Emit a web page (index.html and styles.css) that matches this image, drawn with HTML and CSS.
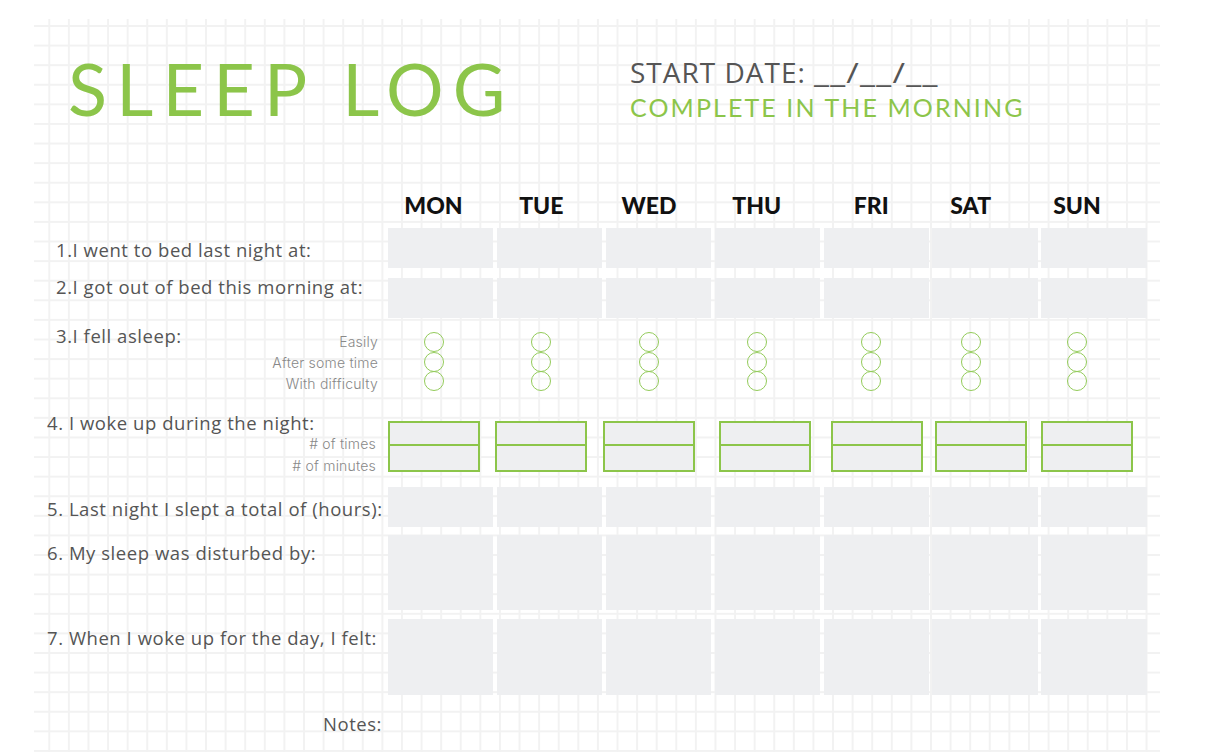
FILE: index.html
```html
<!DOCTYPE html>
<html lang="en">
<head>
<meta charset="utf-8">
<title>Sleep Log</title>
<link rel="stylesheet" href="styles.css">
</head>
<body>
<div class="paper">
  <header class="top">
    <h1 class="title">SLEEP LOG</h1>
    <div class="meta">
      <div class="start">START DATE: <span class="blank">__/__/__</span></div>
      <div class="when">COMPLETE IN THE MORNING</div>
    </div>
  </header>

  <div class="row days">
    <div class="label"></div>
    <div class="daycols">
      <span>MON</span><span>TUE</span><span>WED</span><span>THU</span><span>FRI</span><span>SAT</span><span>SUN</span>
    </div>
  </div>

  <div class="row r1">
    <div class="label">1.I went to bed last night at:</div>
    <div class="cells"><div class="box"></div><div class="box"></div><div class="box"></div><div class="box"></div><div class="box"></div><div class="box"></div><div class="box"></div></div>
  </div>

  <div class="row r2">
    <div class="label">2.I got out of bed this morning at:</div>
    <div class="cells"><div class="box"></div><div class="box"></div><div class="box"></div><div class="box"></div><div class="box"></div><div class="box"></div><div class="box"></div></div>
  </div>

  <div class="row r3">
    <div class="label split">
      <span>3.I fell asleep:</span>
      <ul class="opts"><li>Easily</li><li>After some time</li><li>With difficulty</li></ul>
    </div>
    <div class="daycols bubbles">
      <div class="stack"><i></i><i></i><i></i></div>
      <div class="stack"><i></i><i></i><i></i></div>
      <div class="stack"><i></i><i></i><i></i></div>
      <div class="stack"><i></i><i></i><i></i></div>
      <div class="stack"><i></i><i></i><i></i></div>
      <div class="stack"><i></i><i></i><i></i></div>
      <div class="stack"><i></i><i></i><i></i></div>
    </div>
  </div>

  <div class="row r4">
    <div class="label wide stacked">
      <span>4. I woke up during the night:</span>
      <ul class="opts"><li># of times</li><li># of minutes</li></ul>
    </div>
    <div class="wakecols">
      <div class="wake"><i></i><i></i></div>
      <div class="wake"><i></i><i></i></div>
      <div class="wake"><i></i><i></i></div>
      <div class="wake"><i></i><i></i></div>
      <div class="wake"><i></i><i></i></div>
      <div class="wake"><i></i><i></i></div>
      <div class="wake"><i></i><i></i></div>
    </div>
  </div>

  <div class="row r5">
    <div class="label wide">5. Last night I slept a total of (hours):</div>
    <div class="cells"><div class="box"></div><div class="box"></div><div class="box"></div><div class="box"></div><div class="box"></div><div class="box"></div><div class="box"></div></div>
  </div>

  <div class="row r6">
    <div class="label wide">6. My sleep was disturbed by:</div>
    <div class="cells"><div class="box"></div><div class="box"></div><div class="box"></div><div class="box"></div><div class="box"></div><div class="box"></div><div class="box"></div></div>
  </div>

  <div class="row r7">
    <div class="label wide">7. When I woke up for the day, I felt:</div>
    <div class="cells"><div class="box"></div><div class="box"></div><div class="box"></div><div class="box"></div><div class="box"></div><div class="box"></div><div class="box"></div></div>
  </div>

  <div class="row notes">
    <div class="label notes-label">Notes:</div>
  </div>
</div>
</body>
</html>
```

FILE: styles.css
```css
* { box-sizing: border-box; }

html, body {
  margin: 0;
  padding: 0;
  background: #ffffff;
  overflow: hidden;
}

body {
  width: 1218px;
  height: 752px;
  font-family: "Open Sans", "Liberation Sans", sans-serif;
  color: #555555;
}

.paper {
  margin: 19px 0 0 34px;
  width: 1126px;
  height: 733px;
  padding-top: 33px;
  background-color: #ffffff;
  background-image:
    linear-gradient(to right, #f2f2f2 2px, transparent 2px),
    linear-gradient(to bottom, #f2f2f2 2px, transparent 2px);
  background-size: 19.6px 19.6px;
  background-position: 14.3px 6px;
}

/* header */
.top {
  display: grid;
  grid-template-columns: 562px auto;
  padding-left: 34px;
  height: 72px;
}

.title {
  margin: 0;
  font-family: "Lato", sans-serif;
  font-weight: 400;
  font-size: 72px;
  line-height: 72px;
  letter-spacing: 0.128em;
  color: #8cc54a;
  white-space: nowrap;
}

.meta {
  padding-top: 4px;
}

.start {
  font-family: "Open Sans", sans-serif;
  font-size: 28px;
  line-height: 32px;
  color: #555555;
  letter-spacing: 1px;
  white-space: nowrap;
}

.blank {
  display: inline-block;
  transform: scaleX(1.22);
  transform-origin: left center;
}

.when {
  margin-top: 4px;
  font-family: "Lato", sans-serif;
  font-weight: 400;
  font-size: 25px;
  line-height: 30px;
  color: #8cc54a;
  letter-spacing: 2.1px;
  white-space: nowrap;
}

/* rows */
.row {
  display: flex;
  align-items: flex-start;
}

.label {
  flex: 0 0 354px;
  width: 354px;
  padding-left: 22px;
  font-size: 18.5px;
  line-height: 20px;
  letter-spacing: 0.55px;
  color: #555555;
  white-space: nowrap;
}

.label.wide { padding-left: 13px; }

.daycols {
  display: grid;
  grid-template-columns: 91px 124.6px 90.8px 124.6px 104.6px 94.2px 118.4px;
  justify-items: center;
}

.days { margin-top: 67.5px; }

.days .daycols span {
  font-family: "Lato", sans-serif;
  font-weight: 900;
  font-size: 23px;
  line-height: 26px;
  color: #111111;
}

.cells {
  display: grid;
  grid-template-columns: repeat(7, 105.3px);
  column-gap: 3.6px;
}

.box {
  background: #eeeff1;
  height: 40px;
}

.r1 { margin-top: 10.5px; }
.r1 .label { padding-top: 11.7px; }

.r2 { margin-top: 10px; }
.r2 .label { margin-top: -1px; }

.r3 { margin-top: 8px; }

.split {
  display: flex;
  justify-content: space-between;
  align-items: flex-start;
  padding-right: 10px;
}

.opts {
  list-style: none;
  margin: 0;
  padding: 0;
  text-align: right;
  font-family: "Inter", "Lato", sans-serif;
  font-weight: 300;
  font-size: 14px;
  letter-spacing: 0.2px;
  color: #888888;
}

.r3 .opts {
  padding-top: 4.9px;
  line-height: 21px;
}

.bubbles { padding-top: 6.4px; }

.stack {
  display: flex;
  flex-direction: column;
}

.stack i {
  display: block;
  width: 20px;
  height: 20px;
  border: 1.7px solid #93cb5a;
  border-radius: 50%;
}

.stack i + i { margin-top: -0.7px; }

.r4 { margin-top: 18.8px; }

.stacked {
  display: flex;
  flex-direction: column;
  padding-right: 12px;
}

.r4 .opts { line-height: 21.7px; padding-top: 0.5px; }

.wakecols {
  display: grid;
  grid-template-columns: 107px 108px 116px 112px 104px 106px 92px;
  padding-top: 8.7px;
}

.wake {
  width: 92px;
  height: 50.6px;
  border: 2px solid #8cc54a;
  background: #eeeff1;
  display: flex;
  flex-direction: column;
}

.wake i {
  display: block;
  height: 22.6px;
  border-bottom: 2px solid #8cc54a;
}

.wake i + i {
  border-bottom: 0;
  flex: 1;
}

.r5 { margin-top: 10.3px; }
.r5 .label { padding-top: 12.3px; }

.r6 { margin-top: 7.7px; }
.r6 .box { height: 75.7px; }
.r6 .label { padding-top: 8px; }

.r7 { margin-top: 8.6px; }
.r7 .box { height: 76.4px; }
.r7 .label { padding-top: 9.4px; }

.notes { margin-top: 19px; }

.notes-label {
  text-align: right;
  padding-left: 0;
  padding-right: 6px;
}
```
